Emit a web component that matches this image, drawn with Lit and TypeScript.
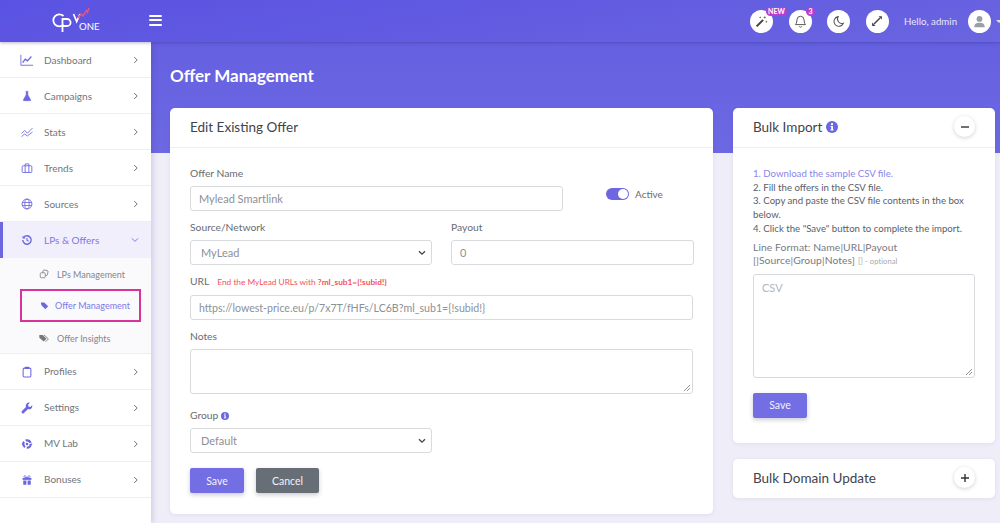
import { LitElement, html, css, svg } from "lit";
import { customElement } from "lit/decorators.js";

const icon = (body: unknown, size = 14) => html`<svg class="ico" width=${size} height=${size} viewBox="0 0 16 16" aria-hidden="true">${body}</svg>`;
const small = (body: unknown, k: number) => svg`<g transform="translate(8 8) scale(${k}) translate(-8 -8)">${body}</g>`;

const icons: Record<string, unknown> = {
  dash: svg`<path d="M1 2v12h14" fill="none" stroke="currentColor" stroke-width="1"/><path d="M3 11l3-4 2.5 2L13 4" fill="none" stroke="currentColor" stroke-width="1.5"/>`,
  flask: small(svg`<path d="M6 1.5h4M6.8 2v4.5L3 13.2c-.4.8 0 1.3.8 1.3h8.4c.8 0 1.2-.5.8-1.3L9.2 6.5V2z" fill="currentColor" stroke="currentColor" stroke-width=".8"/>`, 0.82),
  stats: small(svg`<path d="M1 10l4-4 3.5 3.5L15 3M1 14l4-3.5L8.5 13 15 8" fill="none" stroke="currentColor" stroke-width="1.1"/>`, 0.9),
  brief: small(svg`<rect x="1.5" y="5" width="13" height="9" rx="1.2" fill="none" stroke="currentColor" stroke-width="1.2"/><path d="M5.5 5V2.5h5V5M5.5 5v9M10.5 5v9" fill="none" stroke="currentColor" stroke-width="1.2"/>`, 0.85),
  globe: small(svg`<circle cx="8" cy="8" r="6.6" fill="none" stroke="currentColor" stroke-width="1.2"/><ellipse cx="8" cy="8" rx="3" ry="6.6" fill="none" stroke="currentColor" stroke-width="1.1"/><path d="M1.5 6h13M1.5 10h13" stroke="currentColor" stroke-width="1.1"/>`, 0.85),
  hist: small(svg`<path d="M3.2 4.4A6 6 0 1 1 2 8" fill="none" stroke="currentColor" stroke-width="2"/><path d="M1.6 1.8l.2 4.2 4.2-.2z" fill="currentColor"/><path d="M8 5v3.4l2.2 1.4" fill="none" stroke="currentColor" stroke-width="1.5"/>`, 0.8),
  copy: svg`<rect x="6" y="2" width="8" height="8" rx="1.5" fill="none" stroke="currentColor" stroke-width="1.2" transform="rotate(12 10 6)"/><rect x="2" y="6" width="8" height="8" rx="1.5" fill="#fafafc" stroke="currentColor" stroke-width="1.2"/>`,
  tag: svg`<path d="M1.5 2.5h6l7 7-5 5-7-7z" fill="currentColor"/>`,
  tags: svg`<path d="M.5 3h5.5l6 6-4.5 4.5-7-6z" fill="currentColor"/><path d="M8 3l7 6.5-4.5 4.5" fill="none" stroke="currentColor" stroke-width="1.4"/>`,
  clip: small(svg`<rect x="2.8" y="2.8" width="10.4" height="12" rx="1.6" fill="none" stroke="currentColor" stroke-width="1.4"/><rect x="5" y="1" width="6" height="3" rx=".8" fill="currentColor"/>`, 0.85),
  wrench: small(svg`<path d="M15 4.2l-2.6 2.4-2.4-.7-.6-2.3L11.8 1A4.2 4.2 0 0 0 6.6 6.6L1.2 12a1.9 1.9 0 0 0 2.7 2.7l5.5-5.4A4.2 4.2 0 0 0 15 4.2z" fill="currentColor"/>`, 0.85),
  lab: small(svg`<circle cx="8" cy="8" r="5" fill="none" stroke="currentColor" stroke-width="3" stroke-dasharray="8 2.5"/><circle cx="8" cy="8" r="1.8" fill="currentColor"/><path d="M1 8h2M13 8h2" stroke="currentColor" stroke-width="1.4"/>`, 0.85),
  gift: small(svg`<rect x="1.5" y="4.8" width="13" height="3" fill="currentColor"/><path d="M2.5 8.6h4.6V15H2.5zM8.9 8.6h4.6V15H8.9z" fill="currentColor"/><path d="M8 4.6C6 1 3.4 1.2 3.8 3.2 4 4.4 6.4 4.6 8 4.6zM8 4.6c2-3.6 4.6-3.4 4.2-1.4-.2 1.2-2.6 1.4-4.2 1.4z" fill="none" stroke="currentColor" stroke-width="1.2"/>`, 0.78),
};

const chevR = html`<svg class="chev" width="6" height="8" viewBox="0 0 6 8"><path d="M1.2 1l3 3-3 3" fill="none" stroke="currentColor" stroke-width="1"/></svg>`;
const chevD = html`<svg class="chev" width="8" height="6" viewBox="0 0 8 6"><path d="M1 1.4l3 3 3-3" fill="none" stroke="currentColor" stroke-width="1"/></svg>`;
const info = (size: number) => html`<svg class="info" width=${size} height=${size} viewBox="0 0 16 16"><circle cx="8" cy="8" r="8" fill="#6c66e0"/><rect x="6.9" y="6.8" width="2.4" height="5.6" fill="#fff"/><rect x="5.9" y="11.2" width="4.3" height="1.3" fill="#fff"/><rect x="5.9" y="6.6" width="2.4" height="1.2" fill="#fff"/><circle cx="8" cy="4.2" r="1.5" fill="#fff"/></svg>`;

@customElement("app-root")
export class AppRoot extends LitElement {
  static styles = css`
    :host { display: block; width: 1000px; height: 523px; overflow: hidden; font-family: "Lato", "Noto Sans", sans-serif; color: #4a4f57; background: #eeedf8; }
    * { box-sizing: border-box; }
    .page { display: grid; grid-template-columns: 151px 1fr; grid-template-rows: 42px 1fr; width: 1000px; height: 523px; }
    .top { grid-column: 1 / 3; display: flex; align-items: center; background: linear-gradient(170deg, #5a52e2, #6a65e0); box-shadow: 0 1px 3px rgba(50,40,120,.35); z-index: 2; color: #fff; }
    .brand { width: 151px; display: flex; justify-content: center; flex: none; }
    .logo { margin-top: -2px; }
    .ham { display: flex; flex-direction: column; gap: 2.5px; width: 13px; margin: 0 0 2px -2px; }
    .ham i { display: block; height: 2px; background: #fff; border-radius: 1px; }
    .tools { margin-left: auto; display: flex; align-items: center; }
    .round { width: 23px; height: 23px; border-radius: 50%; background: #fff; display: flex; align-items: center; justify-content: center; color: #4a4f57; position: relative; margin-right: 15.5px; flex: none; }
    .badge { position: absolute; background: #bb3dcc; color: #fff; font-size: 7px; font-weight: 700; line-height: 9px; height: 9px; border-radius: 5px; text-align: center; }
    .b-new { top: -3px; left: 16px; width: 21px; }
    .b-num { top: -3px; left: 17.5px; width: 9px; }
    .hello { font-size: 9.7px; color: #e8e6fb; margin: 0 10px 0 0; width: 53.5px; white-space: nowrap; }
    .avatar { width: 23px; height: 23px; border-radius: 50%; background: #fff; display: flex; align-items: center; justify-content: center; color: #9a9ea6; flex: none; margin-right: 5px; }
    .caret { width: 0; height: 0; border-left: 3px solid transparent; border-right: 3px solid transparent; border-top: 3px solid #ddd; margin-right: -1.5px; }

    .side { background: #fff; box-shadow: 2px 0 5px rgba(60,50,120,.16); z-index: 1; font-size: 10px; }
    .item { height: 36px; display: flex; align-items: center; padding: 0 12px 0 20px; border-bottom: 1px solid #eeeef2; color: #71757c; }
    .item .ico { color: #6c66e0; margin-right: 10px; flex: none; }
    .item .lbl { flex: 1; }
    .item.up .lbl { margin-top: -2px; }
    .chev { color: #6f737a; flex: none; }
    .item.open { background: #f1effc; color: #7d78e8; position: relative; border-bottom: none; }
    .item.open .chev { color: #7d78e8; margin-left: -1px; }
    .item.open::before { content: ""; position: absolute; left: 0; top: 0; bottom: 0; width: 3px; background: #6c66e0; }
    .sub { background: #fafafc; border-bottom: 1px solid #eeeef2; height: 96px; }
    .subrow { height: 32px; display: flex; align-items: center; padding-left: 39px; font-size: 9px; color: #82868c; }
    .subrow .ico { margin-right: 8px; flex: none; color: #777; }
    .subrow.active { color: #7d78e8; margin: -1px 10px 0 20px; width: 121px; height: 33px; border: 2px solid #d7349b; padding-left: 18px; }
    .subrow.active .ico { color: #6c66e0; margin-right: 6px; }

    .main { position: relative; overflow: hidden; padding: 0 5px 0 19px; background: linear-gradient(#6560e0 0, #6d68e2 111px, #eeedf8 111px); }
    h1 { margin: 0; font-size: 17px; font-weight: 700; color: #fff; height: 66px; padding-top: 24px; line-height: 20px; }
    .cols { display: grid; grid-template-columns: 543px 262px; gap: 20px; align-items: start; }
    .stack { display: flex; flex-direction: column; gap: 16px; }
    .card { background: #fff; border-radius: 5px; box-shadow: 0 1px 4px rgba(70,60,130,.08); }
    .head { height: 40px; border-bottom: 1px solid #efeff3; display: flex; align-items: center; padding: 0 20px 2px; font-size: 13.5px; color: #3f434a; gap: 4px; }
    .edit { height: 406px; }
    .form { padding: 19px 20px 0; display: flex; flex-direction: column; }
    label { display: block; font-size: 10.3px; line-height: 13px; color: #686c73; margin-bottom: 6px; font-weight: 400; }
    .ctl { height: 25px; border: 1px solid #d9dade; border-radius: 3px; background: #fff; display: flex; align-items: center; padding: 0 8px; font-size: 11px; color: #8d9097; white-space: nowrap; }
    .ctl.url { font-size: 10.6px; }
    .sel { padding: 0 5px 0 10px; justify-content: space-between; }
    .sel svg { color: #444; }
    .narrow { width: 242px; }
    .r1 { display: grid; grid-template-columns: 373px 1fr; height: 54px; }
    .r2 { display: grid; grid-template-columns: 242px 243px; gap: 19px; margin-bottom: 10px; }
    .tog { display: flex; align-items: center; gap: 6px; padding: 10px 0 0 43px; height: 44px; font-size: 10px; color: #686c73; }
    .switch { width: 23px; height: 12px; border-radius: 6px; background: #6c66e0; position: relative; }
    .switch::after { content: ""; position: absolute; right: 1px; top: 1px; width: 10px; height: 10px; background: #fff; border-radius: 50%; }
    .urlhint { color: #f4515c; font-size: 8.3px; margin-left: 8px; }
    .urlhint b { font-weight: 700; }
    .mt { margin-top: 10px; }
    .area { height: 45px; border: 1px solid #d9dade; border-radius: 3px; position: relative; }
    .grip { position: absolute; right: 1px; bottom: 1px; }
    .grp { margin-top: 15px; display: flex; align-items: center; gap: 3px; margin-bottom: 6px; font-size: 10.3px; line-height: 13px; color: #686c73; }
    .btns { display: flex; gap: 12px; margin-top: 15px; }
    .btn { height: 25px; border-radius: 2px; display: flex; align-items: center; justify-content: center; color: #f2f2fb; font-size: 10.5px; box-shadow: 0 2px 4px rgba(50,50,90,.25); }
    .save { background: #736ee4; width: 54px; }
    .cancel { background: #676e76; width: 63px; }
    .bulk { height: 335px; }
    .bulkh { padding: 0 20px 2px; justify-content: flex-start; }
    .rbtn { margin-left: auto; width: 21px; height: 21px; border-radius: 50%; background: #fff; box-shadow: 0 1px 4px rgba(0,0,0,.18); display: flex; align-items: center; justify-content: center; }
    .rbtn svg { color: #333; }
    .bbody { padding: 19px 20px; font-size: 9.65px; line-height: 13.7px; color: #5a5e65; }
    .bbody .lk { color: #8a85ea; }
    .fmt { margin-top: 5px; font-size: 10.3px; color: #777b82; letter-spacing: .1px; }
    .fmtline { display: flex; align-items: baseline; gap: 3px; }
    .fmtline small { font-size: 7.5px; color: #a4a7ad; }
    .csv { margin-top: 5px; height: 104px; border: 1px solid #d9dade; border-radius: 3px; padding: 6px 8px; font-size: 11px; color: #b4b6bb; position: relative; }
    .bbody .btn { margin-top: 15px; }
    .dom { height: 39px; border-bottom: none; }
  `;

  private nav(ic: string, label: string, up = false) {
    return html`<div class="item ${up ? "up" : ""}">${icon(icons[ic])}<span class="lbl">${label}</span>${chevR}</div>`;
  }

  render() {
    const selChev = html`<svg width="8" height="6" viewBox="0 0 8 6"><path d="M1 1.2l3 3 3-3" fill="none" stroke="currentColor" stroke-width="1.3"/></svg>`;
    const grip = html`<svg class="grip" width="8" height="8" viewBox="0 0 8 8"><path d="M7 1L1 7M7 4L4 7" stroke="#777" stroke-width=".8"/></svg>`;
    return html`
      <div class="page">
        <header class="top">
          <div class="brand">
            <svg width="50" height="26" viewBox="0 0 50 26" class="logo">
              <path d="M12.5 9a6 6 0 1 0 0 8.6" fill="none" stroke="#fff" stroke-width="1.8"/>
              <path d="M11.5 25V12h4.6a3.5 3.5 0 0 1 0 7H11.5" fill="none" stroke="#fff" stroke-width="1.8"/>
              <path d="M22.5 7l3.2 7.5L29 7" fill="none" stroke="#fff" stroke-width="1.7"/>
              <path d="M27 11l3-4 2 2 3.5-5.5 1 1.5 1.5-4" fill="none" stroke="#e2557f" stroke-width="1.5"/>
              <text x="28" y="22.5" font-size="9.6" fill="#fff" font-family="Lato, sans-serif">ONE</text>
            </svg>
          </div>
          <div class="ham"><i></i><i></i><i></i></div>
          <div class="tools">
            <div class="round">
              <svg width="13" height="13" viewBox="0 0 16 16"><path d="M2 14L10 6" stroke="#444" stroke-width="2.6"/><path d="M12 1.5v3M10.5 3h3M14 7v2.4M13 8.2h2M6.5 2v2M5.5 3h2" stroke="#666" stroke-width=".9"/></svg>
              <span class="badge b-new">NEW</span>
            </div>
            <div class="round">
              <svg width="13" height="13" viewBox="0 0 16 16"><path d="M8 1.6a4.4 4.4 0 0 0-4.4 4.4c0 4.2-1.8 5.8-1.8 5.8h12.4S12.4 10.2 12.4 6A4.4 4.4 0 0 0 8 1.6zM6.5 14a1.6 1.6 0 0 0 3 0" fill="none" stroke="#555" stroke-width="1.2"/></svg>
              <span class="badge b-num">3</span>
            </div>
            <div class="round">
              <svg width="13" height="13" viewBox="0 0 16 16"><path d="M7.5 2a6 6 0 1 0 6.5 8.2A5.6 5.6 0 0 1 7.5 2z" fill="none" stroke="#555" stroke-width="1.3"/></svg>
            </div>
            <div class="round">
              <svg width="12" height="12" viewBox="0 0 16 16"><path d="M10 1.5h4.5V6zM6 14.5H1.5V10z" fill="#444"/><path d="M12 4L4 12" stroke="#444" stroke-width="1.8"/></svg>
            </div>
            <span class="hello">Hello, admin</span>
            <div class="avatar">
              <svg width="13" height="13" viewBox="0 0 16 16"><circle cx="8" cy="4.8" r="3.6" fill="currentColor"/><path d="M1.5 15c0-4 2.6-5.6 6.5-5.6s6.5 1.6 6.5 5.6z" fill="currentColor"/></svg>
            </div>
            <span class="caret"></span>
          </div>
        </header>

        <nav class="side">
          ${this.nav("dash", "Dashboard")}
          ${this.nav("flask", "Campaigns")}
          ${this.nav("stats", "Stats")}
          ${this.nav("brief", "Trends")}
          ${this.nav("globe", "Sources")}
          <div class="item open">${icon(icons.hist)}<span class="lbl">LPs &amp; Offers</span>${chevD}</div>
          <div class="sub">
            <div class="subrow">${icon(icons.copy, 10)}<span>LPs Management</span></div>
            <div class="subrow active">${icon(icons.tag, 9)}<span>Offer Management</span></div>
            <div class="subrow">${icon(icons.tags, 10)}<span>Offer Insights</span></div>
          </div>
          ${this.nav("clip", "Profiles", true)}
          ${this.nav("wrench", "Settings", true)}
          ${this.nav("lab", "MV Lab", true)}
          ${this.nav("gift", "Bonuses", true)}
        </nav>

        <main class="main">
          <h1>Offer Management</h1>
          <div class="cols">
            <section class="card edit">
              <div class="head">Edit Existing Offer</div>
              <div class="form">
                <div class="r1">
                  <div><label>Offer Name</label><div class="ctl">Mylead Smartlink</div></div>
                  <div class="tog"><span class="switch"></span><span>Active</span></div>
                </div>
                <div class="r2">
                  <div><label>Source/Network</label><div class="ctl sel">MyLead ${selChev}</div></div>
                  <div><label>Payout</label><div class="ctl">0</div></div>
                </div>
                <label>URL<span class="urlhint">End the MyLead URLs with <b>?ml_sub1={!subid!}</b></span></label>
                <div class="ctl url">https://lowest-price.eu/p/7x7T/fHFs/LC6B?ml_sub1={!subid!}</div>
                <label class="mt">Notes</label>
                <div class="area">${grip}</div>
                <div class="grp">Group ${info(8)}</div>
                <div class="ctl sel narrow">Default ${selChev}</div>
                <div class="btns"><div class="btn save">Save</div><div class="btn cancel">Cancel</div></div>
              </div>
            </section>
            <div class="stack">
              <section class="card bulk">
                <div class="head bulkh">Bulk Import ${info(12)}
                  <div class="rbtn"><svg width="8" height="8" viewBox="0 0 8 8"><path d="M0 4h8" stroke="currentColor" stroke-width="1.4"/></svg></div>
                </div>
                <div class="bbody">
                  <div class="lk">1. Download the sample CSV file.</div>
                  <div>2. Fill the offers in the CSV file.</div>
                  <div>3. Copy and paste the CSV file contents in the box below.</div>
                  <div>4. Click the "Save" button to complete the import.</div>
                  <div class="fmt">
                    <div>Line Format: Name|URL|Payout</div>
                    <div class="fmtline"><span>[|Source|Group|Notes]</span><small>[] - optional</small></div>
                  </div>
                  <div class="csv">CSV${grip}</div>
                  <div class="btn save">Save</div>
                </div>
              </section>
              <section class="card">
                <div class="head bulkh dom">Bulk Domain Update
                  <div class="rbtn"><svg width="8" height="8" viewBox="0 0 8 8"><path d="M0 4h8M4 0v8" stroke="currentColor" stroke-width="1.4"/></svg></div>
                </div>
              </section>
            </div>
          </div>
        </main>
      </div>
    `;
  }
}
